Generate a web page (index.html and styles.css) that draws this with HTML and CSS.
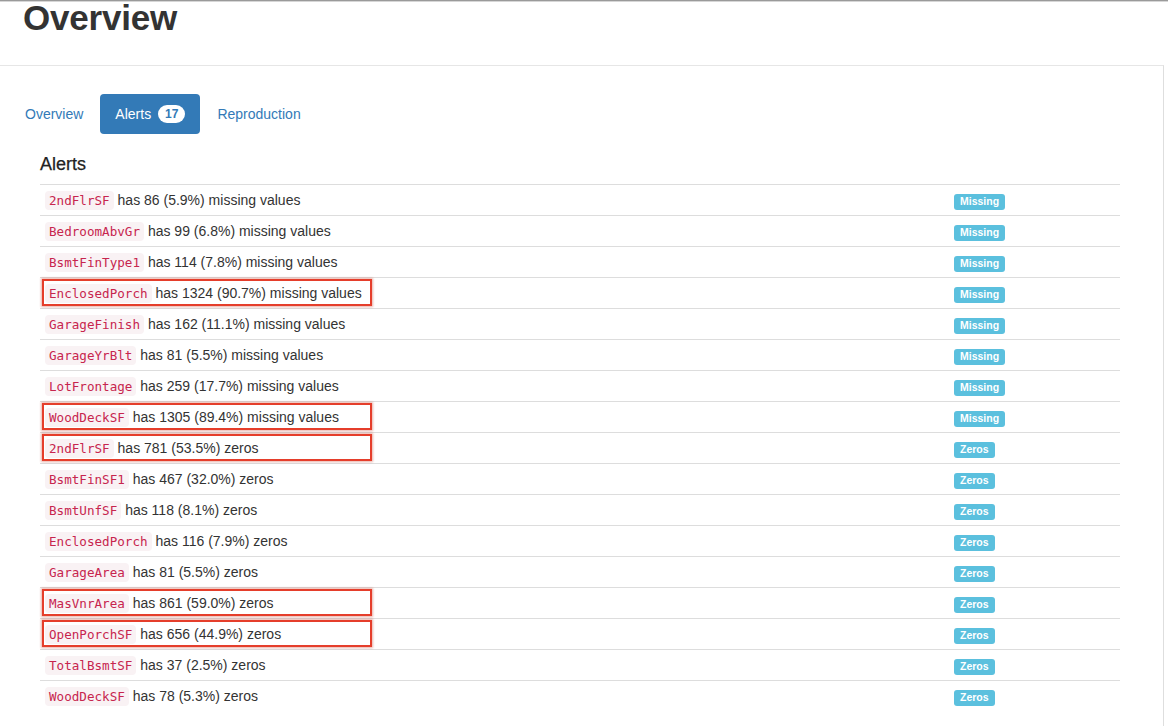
FILE: index.html
```html
<!DOCTYPE html>
<html>
<head>
<meta charset="utf-8">
<link rel="stylesheet" href="styles.css">
</head>
<body>
<div class="topline"></div>
<header class="page-header">
  <h1>Overview</h1>
</header>
<main class="content">
  <ul class="nav-pills">
    <li><a href="#">Overview</a></li>
    <li class="active"><a href="#">Alerts <span class="badge">17</span></a></li>
    <li><a href="#">Reproduction</a></li>
  </ul>
  <section class="alerts">
    <h4>Alerts</h4>
    <table class="alert-table">
      <colgroup><col class="c1"><col class="c2"></colgroup>
      <tbody>
        <tr><td><code>2ndFlrSF</code> has 86 (5.9%) missing values</td><td><span class="label">Missing</span></td></tr>
        <tr><td><code>BedroomAbvGr</code> has 99 (6.8%) missing values</td><td><span class="label">Missing</span></td></tr>
        <tr><td><code>BsmtFinType1</code> has 114 (7.8%) missing values</td><td><span class="label">Missing</span></td></tr>
        <tr><td class="marked"><code>EnclosedPorch</code> has 1324 (90.7%) missing values<div class="mark"></div></td><td><span class="label">Missing</span></td></tr>
        <tr><td><code>GarageFinish</code> has 162 (11.1%) missing values</td><td><span class="label">Missing</span></td></tr>
        <tr><td><code>GarageYrBlt</code> has 81 (5.5%) missing values</td><td><span class="label">Missing</span></td></tr>
        <tr><td><code>LotFrontage</code> has 259 (17.7%) missing values</td><td><span class="label">Missing</span></td></tr>
        <tr><td class="marked"><code>WoodDeckSF</code> has 1305 (89.4%) missing values<div class="mark"></div></td><td><span class="label">Missing</span></td></tr>
        <tr><td class="marked"><code>2ndFlrSF</code> has 781 (53.5%) zeros<div class="mark"></div></td><td><span class="label">Zeros</span></td></tr>
        <tr><td><code>BsmtFinSF1</code> has 467 (32.0%) zeros</td><td><span class="label">Zeros</span></td></tr>
        <tr><td><code>BsmtUnfSF</code> has 118 (8.1%) zeros</td><td><span class="label">Zeros</span></td></tr>
        <tr><td><code>EnclosedPorch</code> has 116 (7.9%) zeros</td><td><span class="label">Zeros</span></td></tr>
        <tr><td><code>GarageArea</code> has 81 (5.5%) zeros</td><td><span class="label">Zeros</span></td></tr>
        <tr><td class="marked"><code>MasVnrArea</code> has 861 (59.0%) zeros<div class="mark"></div></td><td><span class="label">Zeros</span></td></tr>
        <tr><td class="marked"><code>OpenPorchSF</code> has 656 (44.9%) zeros<div class="mark"></div></td><td><span class="label">Zeros</span></td></tr>
        <tr><td><code>TotalBsmtSF</code> has 37 (2.5%) zeros</td><td><span class="label">Zeros</span></td></tr>
        <tr><td><code>WoodDeckSF</code> has 78 (5.3%) zeros</td><td><span class="label">Zeros</span></td></tr>
      </tbody>
    </table>
  </section>
</main>
</body>
</html>
```
FILE: styles.css
```css
* { box-sizing: border-box; }
html, body { margin: 0; padding: 0; background: #fff; }
body {
  font-family: "Liberation Sans", Arial, sans-serif;
  font-size: 14px;
  line-height: 20px;
  color: #333;
  overflow: hidden;
}
.topline {
  height: 2px;
  border-top: 1px solid #9a9a9a;
  border-bottom: 1px solid #d6d6d6;
}
.page-header {
  height: 63px;
  padding-left: 23px;
}
.page-header h1 {
  margin: 0;
  font-size: 35px;
  line-height: 31px;
  font-weight: 700;
  color: #333;
  letter-spacing: -0.2px;
}
.content {
  width: 1164px;
  height: 661px;
  border-top: 1px solid #e6e6e6;
  border-right: 1px solid #dedede;
  padding: 28px 0 0 10px;
}
.nav-pills {
  list-style: none;
  margin: 0;
  padding: 0;
  display: flex;
  height: 40px;
}
.nav-pills li { margin-left: 2px; }
.nav-pills li:first-child { margin-left: 0; }
.nav-pills a {
  display: block;
  padding: 10px 15px;
  line-height: 20px;
  color: #337ab7;
  text-decoration: none;
  border-radius: 4px;
}
.nav-pills .active a {
  background: #337ab7;
  color: #fff;
}
.badge {
  display: inline-block;
  min-width: 10px;
  padding: 3px 7px;
  font-size: 12px;
  font-weight: 700;
  line-height: 1;
  text-align: center;
  vertical-align: middle;
  border-radius: 10px;
  background: #fff;
  color: #337ab7;
  margin-left: 3px;
  position: relative;
  top: -1px;
}
.alerts {
  margin-left: 30px;
  width: 1080px;
}
.alerts h4 {
  margin: 20px 0 10px;
  font-size: 18px;
  line-height: 20px;
  font-weight: 500;
  color: #222;
  -webkit-text-stroke: 0.25px #222;
}
.alert-table {
  width: 1080px;
  border-collapse: collapse;
  table-layout: fixed;
}
.alert-table col.c1 { width: 909px; }
.alert-table col.c2 { width: 171px; }
.alert-table tr { height: 31px; }
.alert-table td {
  padding: 5px;
  height: 31px;
  line-height: 20px;
  border-top: 1px solid #ddd;
  vertical-align: top;
  white-space: nowrap;
}
.alert-table td.marked { position: relative; }
code {
  font-family: "DejaVu Sans Mono", "Liberation Mono", monospace;
  font-size: 12.6px;
  line-height: 14px;
  padding: 2px 4px;
  color: #c7254e;
  background: #f9f2f4;
  border-radius: 4px;
}
.label {
  display: inline-block;
  font-size: 10.5px;
  font-weight: 700;
  line-height: 1;
  color: #fff;
  background: #5bc0de;
  padding: 2px 6px 3px;
  border-radius: 3px;
  vertical-align: baseline;
}
.mark {
  position: absolute;
  left: 2px;
  top: 1px;
  width: 330px;
  height: 27px;
  border: 2px solid #e53e2b;
  box-shadow: 0 0 2px 1px rgba(200, 60, 40, 0.4);
  pointer-events: none;
}
```
